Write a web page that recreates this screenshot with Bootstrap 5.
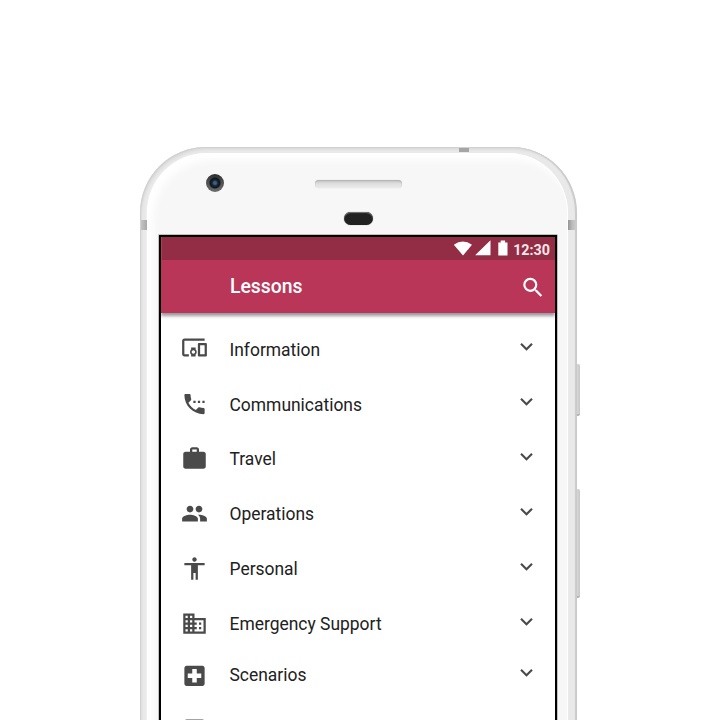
<!DOCTYPE html>
<html lang="en">
<head>
<meta charset="utf-8">
<meta name="viewport" content="width=device-width, initial-scale=1">
<title>Lessons</title>
<link href="https://cdn.jsdelivr.net/npm/bootstrap@5.3.0/dist/css/bootstrap.min.css" rel="stylesheet">
<style>
body{background:#fff;font-family:Roboto,"Liberation Sans",sans-serif;color:#212121}
.stage{width:720px;height:720px;padding:147px 0 0 140px}
.phone{width:437px;height:640px;padding:6px 9px 0 7px;border-radius:66px 66px 0 0;background:#e9e9e9;
 box-shadow:inset 1px 1px 1px #d0d0d0,inset -2px 0 1px #cacaca,inset 2px 3px 2px #dedede}
.face{height:634px;border-radius:60px 60px 0 0;background:#f7f7f7;padding:0 11px 0 12px;box-shadow:inset 6px 7px 9px #fff,inset -1px 0 1px #fff,-1px 0 0 #f0f0f0}
.sensors{height:82px}
.camera{left:66px;top:27px;width:18px;height:18px;border-radius:50%;background:radial-gradient(circle at 50% 50%,#41627c 0 10%,#172938 22%,#0d151c 38%,transparent 48%),linear-gradient(#2a2a2a,#4d4d4d 40%,#6c6c6c)}
.speaker{left:175px;top:33px;width:87px;height:8px;border-radius:5px;background:linear-gradient(#c1c1c1,#dedede 45%,#ebebeb);box-shadow:inset 0 1px 1px #b4b4b4,0 0 1px #ccc}
.proximity{left:204px;top:65px;width:29px;height:13px;border-radius:7px;background:#212121;box-shadow:inset 0 1px 1px #777,0 0 1px #777}
.antenna{background:linear-gradient(90deg,#c4c4c4,#a9a9a9)}
.ant-l{left:1px;top:73px;width:6px;height:10px}
.ant-r{left:428px;top:73px;width:8px;height:10px;background:linear-gradient(90deg,#959595,#bbb 50%,#ccc)}
.ant-t{left:319px;top:1px;width:10px;height:4px;background:#a5a5a5}
.side-key{left:437px;width:3px;border-radius:0 2px 2px 0;background:linear-gradient(90deg,#d8d8d8,#c6c6c6);border-bottom:2px solid #b4b4b4}
.key-power{top:217px;height:52px}
.key-volume{top:342px;height:109px}
.display{height:560px;width:398px;border:2px solid #000;background:#fff;box-shadow:0 0 0 .5px #8b8b8b}
.status{height:23px;background:#932c45;color:#f6e6ea;padding-right:5px;font-size:14.3px;font-weight:700;line-height:27px;border-left:1px solid #b93659}
.appbar{height:53px;background:#b93659;box-shadow:0 3px 3px rgba(0,0,0,.4);padding:0 9.5px 0 69px;color:#fff}
.appbar h1{font-size:19.4px;font-weight:500;line-height:53px}
.lessons{padding-top:8.5px}
.lesson{height:55px;padding:0 16.4px 0 19.5px;font-size:17.45px;color:#212121}
.lesson:nth-child(3){margin-top:-1px}
.lesson:nth-child(7){height:47px}
.lesson:nth-child(8){padding-top:8px}
.glyph{width:27px;height:27px;fill:#4a4a4a;flex:none}
.chev{width:25px;height:25px;fill:#4a4a4a;flex:none;margin-bottom:5px}
.lesson:nth-child(n+3) .chev{margin-bottom:3px}
.label-text{margin-left:22px;line-height:24px;padding-top:1px}
</style>
<script src="https://cdn.jsdelivr.net/npm/bootstrap@5.3.0/dist/js/bootstrap.bundle.min.js"></script>
</head>
<body class="m-0 overflow-hidden">
<svg class="d-none"><symbol id="more" viewBox="0 0 24 24"><path d="M16.59 8.59L12 13.17 7.41 8.59 6 10l6 6 6-6z"/></symbol></svg>
<main class="stage overflow-hidden">
<div class="phone position-relative">
 <span class="antenna ant-l position-absolute"></span><span class="antenna ant-r position-absolute"></span><span class="antenna ant-t position-absolute"></span>
 <span class="side-key key-power position-absolute"></span><span class="side-key key-volume position-absolute"></span>
 <div class="face">
  <div class="sensors"></div>
  <span class="camera position-absolute"></span><span class="speaker position-absolute"></span><span class="proximity position-absolute"></span>
  <div class="display overflow-hidden">
   <div class="status d-flex justify-content-end">
    <svg width="60" height="23" viewBox="449 237 60 23" fill="#fff"><path d="M453.8 244.8q9-6.6 18.2 0L463 255.6zM490.5 240.3v15h-15.4zM498.3 242.5h2.4v-1.9h4.400v1.9h2.4v13h-9.2z"/></svg>
    <span class="ms-1">12:30</span>
   </div>
   <header class="appbar d-flex align-items-center justify-content-between position-relative">
    <h1 class="m-0">Lessons</h1>
    <svg width="26" height="26" viewBox="0 -.5 24 24" fill="#fff"><path d="M15.5 14h-.79l-.28-.27A6.47 6.47 0 0 0 16 9.5 6.5 6.5 0 1 0 9.5 16c1.61 0 3.09-.59 4.23-1.57l.27.28v.79l5 4.99L20.49 19zm-6 0a4.5 4.5 0 1 1 0-9 4.5 4.5 0 0 1 0 9z"/></svg>
   </header>
   <ul class="lessons list-unstyled m-0">
    <li class="lesson d-flex align-items-center"><svg class="glyph mb-1" viewBox="0 0 24 24"><path d="M3 6h18V4H3c-1.1 0-2 .9-2 2v12c0 1.1.9 2 2 2h4v-2H3V6zm10 6H9v1.78c-.61.55-1 1.33-1 2.22s.39 1.67 1 2.22V20h4v-1.78c.61-.55 1-1.34 1-2.22s-.39-1.67-1-2.22V12zm-2 5.5c-.83 0-1.5-.67-1.5-1.5s.67-1.5 1.5-1.5 1.5.67 1.5 1.5-.67 1.5-1.5 1.5zM22 8h-6c-.5 0-1 .5-1 1v10c0 .5.5 1 1 1h6c.5 0 1-.5 1-1V9c0-.5-.5-1-1-1zm-1 10h-4v-8h4v8z"/></svg><span class="label-text flex-fill">Information</span><svg class="chev"><use href="#more"/></svg></li>
    <li class="lesson d-flex align-items-center"><svg class="glyph" viewBox="0 .4 24 24"><path d="M13 9h-2v2h2V9zm4 0h-2v2h2V9zm3 6.5c-1.25 0-2.45-.2-3.57-.57-.35-.11-.74-.03-1.02.24l-2.2 2.2c-2.83-1.44-5.15-3.75-6.59-6.58l2.2-2.21c.28-.27.36-.66.25-1.01C8.7 6.45 8.5 5.25 8.5 4c0-.55-.45-1-1-1H4c-.55 0-1 .45-1 1 0 9.39 7.61 17 17 17 .55 0 1-.45 1-1v-3.5c0-.55-.45-1-1-1zM19 9v2h2V9h-2z"/></svg><span class="label-text flex-fill">Communications</span><svg class="chev"><use href="#more"/></svg></li>
    <li class="lesson d-flex align-items-center"><svg class="glyph" viewBox="0 0 24 24"><path d="M20 6h-4V4c0-1.11-.89-2-2-2h-4c-1.11 0-2 .89-2 2v2H4c-1.11 0-1.99.89-1.99 2L2 19c0 1.11.89 2 2 2h16c1.11 0 2-.89 2-2V8c0-1.11-.89-2-2-2zm-6 0h-4V4h4v2z"/></svg><span class="label-text flex-fill">Travel</span><svg class="chev"><use href="#more"/></svg></li>
    <li class="lesson d-flex align-items-center"><svg class="glyph" viewBox="0 0 24 24"><path d="M16 11c1.66 0 2.99-1.34 2.99-3S17.66 5 16 5s-3 1.34-3 3 1.34 3 3 3zm-8 0c1.66 0 2.99-1.34 2.99-3S9.66 5 8 5 5 6.34 5 8s1.34 3 3 3zm0 2c-2.33 0-7 1.17-7 3.5V19h14v-2.500c0-2.330-4.670-3.500-7-3.500zm8 0c-.29 0-.62.02-.97.05 1.160.84 1.970 1.970 1.970 3.450V19h6v-2.500c0-2.330-4.670-3.500-7-3.500z"/></svg><span class="label-text flex-fill">Operations</span><svg class="chev"><use href="#more"/></svg></li>
    <li class="lesson d-flex align-items-center"><svg class="glyph" viewBox="0 0 24 24"><path d="M12 2c1.1 0 2 .9 2 2s-.9 2-2 2-2-.9-2-2 .9-2 2-2zm9 7h-6v13h-2v-6h-2v6H9V9H3V7h18v2z"/></svg><span class="label-text flex-fill">Personal</span><svg class="chev"><use href="#more"/></svg></li>
    <li class="lesson d-flex align-items-center"><svg class="glyph" viewBox="0 0 24 24"><path d="M12 7V3H2v18h20V7H12zM6 19H4v-2h2v2zm0-4H4v-2h2v2zm0-4H4V9h2v2zm0-4H4V5h2v2zm4 12H8v-2h2v2zm0-4H8v-2h2v2zm0-4H8V9h2v2zm0-4H8V5h2v2zm10 12h-8v-2h2v-2h-2v-2h2v-2h-2V9h8v10zm-2-8h-2v2h2v-2zm0 4h-2v2h2v-2z"/></svg><span class="label-text flex-fill">Emergency Support</span><svg class="chev"><use href="#more"/></svg></li>
    <li class="lesson d-flex align-items-center"><svg class="glyph mt-1" viewBox="0 .6 24 24"><path d="M19 3H5c-1.100 0-1.990.9-1.990 2L3 19c0 1.100.9 2 2 2h14c1.100 0 2-.9 2-2V5c0-1.100-.9-2-2-2zm-1 11h-4v4h-4v-4H6v-4h4V6h4v4h4v4z"/></svg><span class="label-text flex-fill">Scenarios</span><svg class="chev"><use href="#more"/></svg></li>
    <li class="lesson d-flex align-items-center"><svg class="glyph" viewBox="0 0 24 24"><rect x="3" y="3" width="18" height="18" rx="2"/></svg></li>
   </ul>
  </div>
 </div>
</div>
</main>
</body>
</html>
